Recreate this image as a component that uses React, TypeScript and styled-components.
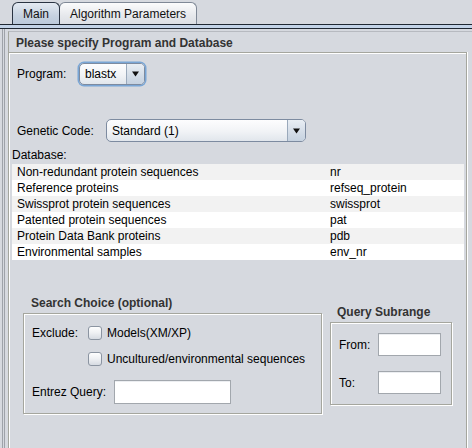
import React from "react";
import styled, { createGlobalStyle } from "styled-components";

const GlobalStyle = createGlobalStyle`
  html, body { margin: 0; padding: 0; }
  body {
    font-family: "Liberation Sans", Arial, sans-serif;
    font-size: 12px;
    color: #000;
    background: #d6d9df;
  }
`;

const Window = styled.div`
  width: 472px;
  height: 448px;
  overflow: hidden;
  background: #d6d9df;
  display: flex;
  flex-direction: column;
`;

const TabBar = styled.div`
  display: flex;
  align-items: flex-end;
  height: 24px;
  flex-shrink: 0;
  padding-left: 12px;
  box-sizing: border-box;
`;

const Tab = styled.div<{ $selected?: boolean }>`
  height: 22px;
  box-sizing: border-box;
  padding: 0 10px;
  display: flex;
  align-items: center;
  border: 1px solid ${(p) => (p.$selected ? "#2a3442" : "#7f8896")};
  border-bottom: none;
  border-radius: 6px 6px 0 0;
  margin-left: ${(p) => (p.$selected ? "0" : "-1px")};
  background: ${(p) =>
    p.$selected
      ? "linear-gradient(#e4eaf2, #c6d2e0 60%, #bccadb)"
      : "linear-gradient(#fbfbfc, #e6e8ec 60%, #dcdfe4)"};
  color: #111;
  position: relative;
  z-index: ${(p) => (p.$selected ? 1 : 0)};
`;

const Band = styled.div`
  height: 5px;
  flex-shrink: 0;
  box-sizing: border-box;
  border-top: 1px solid #1f2732;
  border-bottom: 1px solid #1f2732;
  background: #c3d3e7;
`;

const Content = styled.div`
  flex: 1;
  min-height: 0;
  overflow: hidden;
  display: flex;
  padding-left: 2px;
`;

const DoubleRule = styled.div`
  width: 0;
  flex-shrink: 0;
  border-left: 3px double #9ea2a9;
  margin-right: 3px;
`;

const Body = styled.div`
  flex: 1;
  margin-top: 2px;
  border-left: 1px solid #a3a59e;
  border-top: 1px solid #b7bac0;
  padding-top: 4px;
  display: flex;
  flex-direction: column;
`;

const SectionTitle = styled.div<{ $indent: number }>`
  font-weight: bold;
  color: #333;
  line-height: 14px;
  height: 14px;
  flex-shrink: 0;
  padding-left: ${(p) => p.$indent}px;
  white-space: nowrap;
`;

const Panel = styled.div`
  margin-top: 2px;
  width: 458px;
  height: 420px;
  flex-shrink: 0;
  box-sizing: border-box;
  border-top: 1px solid #a5a69e;
  border-right: 1px solid #a5a69e;
  box-shadow: inset 1px 1px 0 #fff, 1px 0 0 #fff;
  display: flex;
  flex-direction: column;
`;

const FormRow = styled.div<{ $mt: number; $h: number }>`
  display: flex;
  align-items: center;
  margin-top: ${(p) => p.$mt}px;
  margin-left: 8px;
  height: ${(p) => p.$h}px;
  flex-shrink: 0;
`;

const Label = styled.span<{ $w?: number }>`
  display: inline-block;
  width: ${(p) => (p.$w ? `${p.$w}px` : "auto")};
  flex-shrink: 0;
  white-space: nowrap;
`;

const Combo = styled.div<{ $w: number; $h: number; $focused?: boolean }>`
  width: ${(p) => p.$w}px;
  height: ${(p) => p.$h}px;
  box-sizing: border-box;
  margin-left: ${(p) => (p.$focused ? "1px" : "0")};
  display: flex;
  border: 1px solid #7d8ba0;
  border-radius: 5px;
  overflow: hidden;
  background: linear-gradient(#fdfdfe, #f1f3f6 55%, #e1e6ec);
  box-shadow: ${(p) => (p.$focused ? "0 0 0 1.5px #79a6d6" : "none")};
`;

const ComboValue = styled.div`
  flex: 1;
  display: flex;
  align-items: center;
  padding-left: 5px;
  white-space: nowrap;
`;

const ComboArrow = styled.div`
  width: 17px;
  border-left: 1px solid #9aa9bb;
  display: flex;
  align-items: center;
  justify-content: center;
  background: linear-gradient(#e9eef4, #d3dce7 60%, #c6d2e0);
`;

const DbLabel = styled.div`
  margin: 6px 0 0 3px;
  line-height: 14px;
  height: 14px;
  flex-shrink: 0;
`;

const Table = styled.div`
  margin: 2px 0 0 3px;
  width: 452px;
  flex-shrink: 0;
`;

const TableRow = styled.div<{ $odd: boolean }>`
  display: grid;
  grid-template-columns: 318px 1fr;
  height: 16px;
  line-height: 16px;
  background: ${(p) => (p.$odd ? "#f2f2f2" : "#ffffff")};
  white-space: nowrap;
`;

const Cell = styled.span<{ $pad: number }>`
  padding-left: ${(p) => p.$pad}px;
`;

const Bottom = styled.div`
  display: flex;
  align-items: flex-start;
  margin-top: 36px;
  padding-left: 14px;
  flex-shrink: 0;
`;

const Group = styled.div<{ $mt: number; $ml: number }>`
  display: flex;
  flex-direction: column;
  margin-top: ${(p) => p.$mt}px;
  margin-left: ${(p) => p.$ml}px;
`;

const GroupBox = styled.div<{ $w: number; $pad: string }>`
  margin-top: 3px;
  width: ${(p) => p.$w}px;
  box-sizing: border-box;
  padding: ${(p) => p.$pad};
  border: 1px solid #a5a69e;
  box-shadow: inset 1px 1px 0 #fff, 1px 1px 0 #fff;
  display: flex;
  flex-direction: column;
`;

const BoxRow = styled.div<{ $mt: number; $h: number; $ml?: number }>`
  display: flex;
  align-items: center;
  height: ${(p) => p.$h}px;
  margin-top: ${(p) => p.$mt}px;
  margin-left: ${(p) => p.$ml ?? 0}px;
  white-space: nowrap;
`;

const Check = styled.span`
  width: 14px;
  height: 14px;
  box-sizing: border-box;
  border: 1px solid #8b94a1;
  border-radius: 3px;
  background: linear-gradient(#fefefe, #eef0f3 50%, #d6dbe2);
  margin-right: 5px;
  flex-shrink: 0;
`;

const Field = styled.div<{ $w: number; $h: number }>`
  width: ${(p) => p.$w}px;
  height: ${(p) => p.$h}px;
  box-sizing: border-box;
  background: #fff;
  border: 1px solid #a2a7ad;
  box-shadow: inset 0 1px 0 #eceef1;
`;

const Arrow = () => (
  <svg width="7" height="6" viewBox="0 0 7 6">
    <path d="M0 0.5 H7 L3.5 5.5 Z" fill="#111" />
  </svg>
);

const rows: [string, string][] = [
  ["Non-redundant protein sequences", "nr"],
  ["Reference proteins", "refseq_protein"],
  ["Swissprot protein sequences", "swissprot"],
  ["Patented protein sequences", "pat"],
  ["Protein Data Bank proteins", "pdb"],
  ["Environmental samples", "env_nr"],
];

export default function App() {
  return (
    <Window>
      <GlobalStyle />
      <TabBar>
        <Tab $selected>Main</Tab>
        <Tab>Algorithm Parameters</Tab>
      </TabBar>
      <Band />
      <Content>
        <DoubleRule />
        <Body>
          <SectionTitle $indent={7}>Please specify Program and Database</SectionTitle>
          <Panel>
            <FormRow $mt={9} $h={24}>
              <Label $w={61}>Program:</Label>
              <Combo $w={66} $h={22} $focused>
                <ComboValue>blastx</ComboValue>
                <ComboArrow>
                  <Arrow />
                </ComboArrow>
              </Combo>
            </FormRow>
            <FormRow $mt={33} $h={23}>
              <Label $w={89}>Genetic Code:</Label>
              <Combo $w={200} $h={23}>
                <ComboValue>Standard (1)</ComboValue>
                <ComboArrow>
                  <Arrow />
                </ComboArrow>
              </Combo>
            </FormRow>
            <DbLabel>Database:</DbLabel>
            <Table>
              {rows.map(([name, id], i) => (
                <TableRow key={id} $odd={i % 2 === 0}>
                  <Cell $pad={5}>{name}</Cell>
                  <Cell $pad={0}>{id}</Cell>
                </TableRow>
              ))}
            </Table>
            <Bottom>
              <Group $mt={0} $ml={0}>
                <SectionTitle $indent={8}>Search Choice (optional)</SectionTitle>
                <GroupBox $w={299} $pad="12px 0 9px 8px">
                  <BoxRow $mt={0} $h={14}>
                    <Label $w={56}>Exclude:</Label>
                    <Check />
                    <span>Models(XM/XP)</span>
                  </BoxRow>
                  <BoxRow $mt={12} $h={14} $ml={56}>
                    <Check />
                    <span>Uncultured/environmental sequences</span>
                  </BoxRow>
                  <BoxRow $mt={14} $h={24}>
                    <Label $w={82}>Entrez Query:</Label>
                    <Field $w={117} $h={24} />
                  </BoxRow>
                </GroupBox>
              </Group>
              <Group $mt={9} $ml={8}>
                <SectionTitle $indent={7}>Query Subrange</SectionTitle>
                <GroupBox $w={122} $pad="10px 0 10px 8px">
                  <BoxRow $mt={0} $h={23}>
                    <Label $w={39}>From:</Label>
                    <Field $w={63} $h={23} />
                  </BoxRow>
                  <BoxRow $mt={15} $h={23}>
                    <Label $w={39}>To:</Label>
                    <Field $w={63} $h={23} />
                  </BoxRow>
                </GroupBox>
              </Group>
            </Bottom>
          </Panel>
        </Body>
      </Content>
    </Window>
  );
}
